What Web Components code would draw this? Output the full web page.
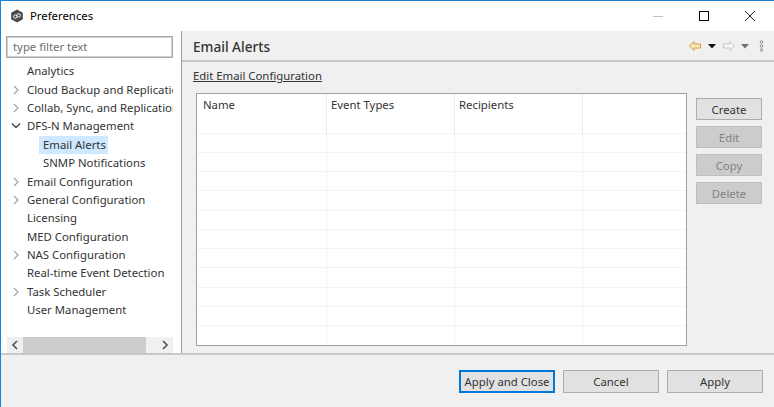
<!DOCTYPE html>
<html>
<head>
<meta charset="utf-8">
<title>Preferences</title>
<style>
html, body { margin: 0; padding: 0; height: 100%; overflow: hidden; }
body { font: 11.35px "Noto Sans", sans-serif; color: #333; }
</style>
</head>
<body>
<pref-window>
  <title-bar slot="title">Preferences</title-bar>
  <pref-tree slot="nav"></pref-tree>
  <alerts-page slot="page"></alerts-page>
  <pref-footer slot="footer"></pref-footer>
</pref-window>

<script>
const windowTemplate = document.createElement("template");
windowTemplate.innerHTML = `
<style>
  :host { display: flex; flex-direction: column; width: 774px; height: 407px; box-sizing: border-box;
    border-top: 1px solid #1883d7; border-left: 1px solid #1883d7; background: #f0f0f0; }
  .body { display: flex; height: 322px; }
  .nav { width: 180px; flex: none; background: #fff; border-right: 1px solid #a0a0a0; }
  .page { flex: 1; min-width: 0; }
</style>
<slot name="title"></slot>
<div class="body">
  <div class="nav"><slot name="nav"></slot></div>
  <div class="page"><slot name="page"></slot></div>
</div>
<slot name="footer"></slot>
`;
class PrefWindow extends HTMLElement {
    constructor() {
        super();
        this.attachShadow({mode: "open"});
        this.shadowRoot.appendChild(windowTemplate.content.cloneNode(true));
    }
}

const titleTemplate = document.createElement("template");
titleTemplate.innerHTML = `
<style>
  :host { display: flex; align-items: center; height: 30px; flex: none; background: #fff; color: #000; }
  .logo { margin: 0 6px 0 9px; width: 14px; height: 14px; }
  .text { flex: 1; padding-bottom: 2px; }
  .ctl { width: 46px; height: 30px; display: flex; align-items: center; justify-content: center; }
</style>
<svg class="logo" viewBox="0 0 14 14">
  <path d="M7 0.5 L12.8 3.7 V10.3 L7 13.5 L1.2 10.3 V3.7 Z" fill="#4a4a4a"/>
  <circle cx="5.4" cy="7.6" r="1.7" fill="none" stroke="#fff" stroke-width="1"/>
  <circle cx="8.6" cy="6.4" r="1.7" fill="none" stroke="#fff" stroke-width="1"/>
</svg>
<span class="text"><slot></slot></span>
<div class="ctl"><svg width="12" height="12"><path d="M1 6.5 H11" stroke="#c4c4c4"/></svg></div>
<div class="ctl"><svg width="12" height="12"><rect x="1.5" y="1.5" width="9" height="9" fill="none" stroke="#000"/></svg></div>
<div class="ctl" style="margin-right:1px"><svg width="12" height="12"><path d="M1 1 L11 11 M11 1 L1 11" stroke="#222" fill="none"/></svg></div>
`;
class TitleBar extends HTMLElement {
    constructor() {
        super();
        this.attachShadow({mode: "open"});
        this.shadowRoot.appendChild(titleTemplate.content.cloneNode(true));
    }
}

const treeItems = [
    ["Analytics", 0, ""],
    ["Cloud Backup and Replication", 0, "closed"],
    ["Collab, Sync, and Replication", 0, "closed"],
    ["DFS-N Management", 0, "open"],
    ["Email Alerts", 1, "", true],
    ["SNMP Notifications", 1, ""],
    ["Email Configuration", 0, "closed"],
    ["General Configuration", 0, "closed"],
    ["Licensing", 0, ""],
    ["MED Configuration", 0, ""],
    ["NAS Configuration", 0, "closed"],
    ["Real-time Event Detection", 0, ""],
    ["Task Scheduler", 0, "closed"],
    ["User Management", 0, ""]
];

const treeTemplate = document.createElement("template");
treeTemplate.innerHTML = `
<style>
  :host { display: flex; flex-direction: column; height: 100%; padding: 5px 8px 0 5px; box-sizing: border-box; color: #333; }
  .filter { height: 22px; box-sizing: border-box; border: 1px solid #a9a9a9; background: #fff; color: #6d6d6d;
    padding: 0 6px; line-height: 19px; outline: 1px solid #d0d0d0; outline-offset: -2px; flex: none; }
  .rows { flex: 1; margin-top: 4px; overflow: hidden; min-height: 0; }
  .row { height: 18.4px; line-height: 18px; display: flex; align-items: center; white-space: nowrap; }
  .twist { width: 21px; flex: none; display: flex; align-items: center; padding-left: 6px; box-sizing: border-box; }
  .row.open .twist { padding-left: 5px; }
  .row.sub { padding-left: 12px; }
  .row.sub .label { padding: 0 2px 0 4px; height: 18.4px; }
  .row.sel .label { background: #cde8ff; }
  .scroll { height: 16px; flex: none; background: #f0f0f0; display: flex; align-items: center; margin-left: 1px; }
  .arrow { width: 16px; height: 16px; display: flex; align-items: center; justify-content: center; flex: none; }
  .thumb { width: 123px; height: 16px; background: #cdcdcd; flex: none; }
  .gap { flex: 1; }
</style>
<div class="filter">type filter text</div>
<div class="rows"></div>
<div class="scroll">
  <div class="arrow"><svg width="8" height="10"><path d="M6 1 L2 5 L6 9" fill="none" stroke="#505050" stroke-width="1.6"/></svg></div>
  <div class="thumb"></div>
  <div class="gap"></div>
  <div class="arrow"><svg width="8" height="10"><path d="M2 1 L6 5 L2 9" fill="none" stroke="#505050" stroke-width="1.6"/></svg></div>
</div>
`;
class PrefTree extends HTMLElement {
    constructor() {
        super();
        this.attachShadow({mode: "open"});
        this.shadowRoot.appendChild(treeTemplate.content.cloneNode(true));
    }

    connectedCallback() {
        this.render();
    }

    render() {
        const rows = this.shadowRoot.querySelector(".rows");
        for (const [label, depth, state, selected] of treeItems) {
            let twist = "";
            if (state === "closed") {
                twist = `<svg width="8" height="10"><path d="M2 1 L6 5 L2 9" fill="none" stroke="#a6a6a6" stroke-width="1.3"/></svg>`;
            } else if (state === "open") {
                twist = `<svg width="10" height="8"><path d="M1 1.5 L5 5.5 L9 1.5" fill="none" stroke="#404040" stroke-width="1.3"/></svg>`;
            }
            rows.innerHTML += `<div class="row${depth ? " sub" : ""}${selected ? " sel" : ""}${state === "open" ? " open" : ""}"><span class="twist">${twist}</span><span class="label">${label}</span></div>`;
        }
    }
}

const pageTemplate = document.createElement("template");
pageTemplate.innerHTML = `
<style>
  :host { display: flex; flex-direction: column; height: 100%; color: #333; }
  .head { height: 29px; flex: none; display: flex; align-items: center; justify-content: space-between; border-bottom: 2px solid #c8c8c8; padding: 0 10px 0 11px; }
  h1 { margin: 2px 0 0; font-size: 13.6px; line-height: 18px; color: #333; font-weight: 500; }
  .tools { display: flex; align-items: center; }
  .link { margin: 5px 0 0 11px; height: 18px; line-height: 18px; flex: none; }
  .link span { text-decoration: underline; }
  .main { display: flex; margin: 8px 0 0 14px; gap: 9px; }
  .side { display: flex; flex-direction: column; gap: 6px; padding-top: 5px; }
</style>
<div class="head">
  <h1>Email Alerts</h1>
  <div class="tools">
    <svg width="14" height="12" style="margin-right:6px"><path d="M6 1.5 L1.5 6 L6 10.5 V8 H12.5 V4 H6 Z" fill="#fbe6b6" stroke="#d6a243"/></svg>
    <svg width="8" height="6" style="margin-right:6px"><path d="M0 1 H8 L4 5.5 Z" fill="#111"/></svg>
    <svg width="14" height="12" style="margin-right:5px"><path d="M8 1.5 L12.5 6 L8 10.5 V8 H1.5 V4 H8 Z" fill="#f4f4f4" stroke="#c8c8c8"/></svg>
    <svg width="8" height="6" style="margin-right:10px"><path d="M0 1 H8 L4 5.5 Z" fill="#707070"/></svg>
    <svg width="5" height="12"><g fill="none" stroke="#909090"><circle cx="2.5" cy="2" r="1.3"/><circle cx="2.5" cy="6" r="1.3"/><circle cx="2.5" cy="10" r="1.3"/></g></svg>
  </div>
</div>
<div class="link"><span>Edit Email Configuration</span></div>
<div class="main">
  <alerts-table></alerts-table>
  <div class="side">
    <pref-button wide>Create</pref-button>
    <pref-button wide disabled>Edit</pref-button>
    <pref-button wide disabled>Copy</pref-button>
    <pref-button wide disabled>Delete</pref-button>
  </div>
</div>
`;
class AlertsPage extends HTMLElement {
    constructor() {
        super();
        this.attachShadow({mode: "open"});
        this.shadowRoot.appendChild(pageTemplate.content.cloneNode(true));
    }
}

const tableTemplate = document.createElement("template");
tableTemplate.innerHTML = `
<style>
  :host { display: block; width: 491px; height: 253px; box-sizing: border-box; border: 1px solid #a0a0a0; background: #fff; overflow: hidden; }
  .grid { display: grid; grid-template-columns: 130px 128px 128px 1fr; grid-auto-rows: 19.25px; }
  .head { grid-row: span 2; height: 39px; padding-left: 4px; line-height: 22px; border-right: 1px solid #e9ebf0; box-sizing: border-box; }
  .head:first-child { padding-left: 6px; }
  .cell { border-right: 1px solid #f1f3f8; border-top: 1px solid #f1f3f8; box-sizing: border-box; }
  .last { border-right: 0; }
</style>
<div class="grid"></div>
`;
class AlertsTable extends HTMLElement {
    constructor() {
        super();
        this.attachShadow({mode: "open"});
        this.shadowRoot.appendChild(tableTemplate.content.cloneNode(true));
    }

    connectedCallback() {
        let html = "";
        for (const name of ["Name", "Event Types", "Recipients", ""]) {
            html += `<div class="head${name ? "" : " last"}">${name}</div>`;
        }
        for (let r = 0; r < 11; r++) {
            for (let c = 0; c < 4; c++) {
                html += `<div class="cell${c === 3 ? " last" : ""}"></div>`;
            }
        }
        this.shadowRoot.querySelector(".grid").innerHTML = html;
    }
}

const footerTemplate = document.createElement("template");
footerTemplate.innerHTML = `
<style>
  :host { display: flex; justify-content: flex-end; gap: 8px; flex: 1; box-sizing: border-box; border-top: 2px solid #c8c8c8; padding: 15px 11px 0 0; background: #f0f0f0; }
</style>
<pref-button focused>Apply and Close</pref-button>
<pref-button>Cancel</pref-button>
<pref-button>Apply</pref-button>
`;
class PrefFooter extends HTMLElement {
    constructor() {
        super();
        this.attachShadow({mode: "open"});
        this.shadowRoot.appendChild(footerTemplate.content.cloneNode(true));
    }
}

const buttonTemplate = document.createElement("template");
buttonTemplate.innerHTML = `
<style>
  :host { display: flex; align-items: center; justify-content: center; width: 96px; height: 23px; box-sizing: border-box;
    border: 1px solid #adadad; background: #e1e1e1; color: #333; white-space: nowrap; }
  :host([wide]) { width: 66px; height: 22px; }
  :host([disabled]) { background: #cccccc; border-color: #bfbfbf; color: #838383; }
  :host([focused]) { border: 2px solid #0078d7; }
</style>
<slot></slot>
`;
class PrefButton extends HTMLElement {
    constructor() {
        super();
        this.attachShadow({mode: "open"});
        this.shadowRoot.appendChild(buttonTemplate.content.cloneNode(true));
    }
}

customElements.define("pref-window", PrefWindow);
customElements.define("title-bar", TitleBar);
customElements.define("pref-tree", PrefTree);
customElements.define("alerts-page", AlertsPage);
customElements.define("alerts-table", AlertsTable);
customElements.define("pref-footer", PrefFooter);
customElements.define("pref-button", PrefButton);
</script>
</body>
</html>
